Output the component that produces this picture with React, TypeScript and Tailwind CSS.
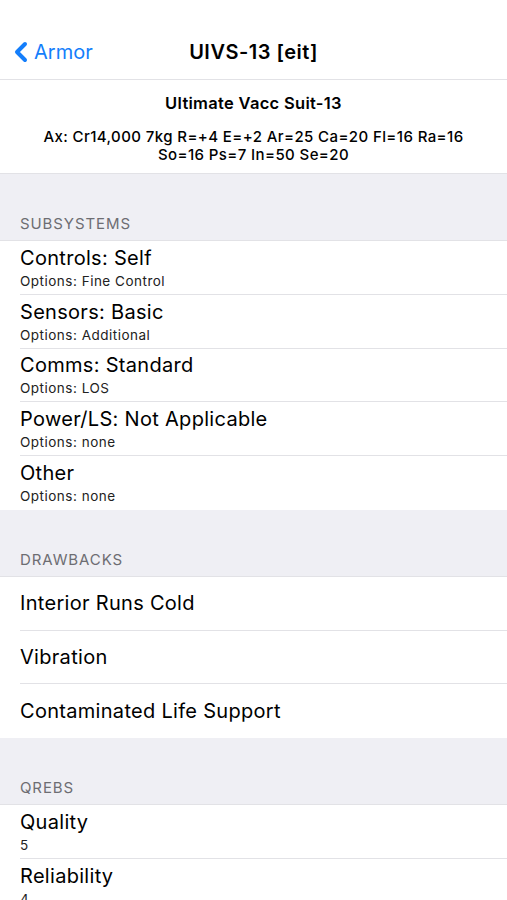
import { ChevronLeft } from "lucide-react";

type Row = { title: string; sub?: string };

const sections: { name: string; rows: Row[] }[] = [
  {
    name: "SUBSYSTEMS",
    rows: [
      { title: "Controls: Self", sub: "Options: Fine Control" },
      { title: "Sensors: Basic", sub: "Options: Additional" },
      { title: "Comms: Standard", sub: "Options: LOS" },
      { title: "Power/LS: Not Applicable", sub: "Options: none" },
      { title: "Other", sub: "Options: none" },
    ],
  },
  {
    name: "DRAWBACKS",
    rows: [
      { title: "Interior Runs Cold" },
      { title: "Vibration" },
      { title: "Contaminated Life Support" },
    ],
  },
  {
    name: "QREBS",
    rows: [
      { title: "Quality", sub: "5" },
      { title: "Reliability", sub: "4" },
      { title: "Ease of Use", sub: "0" },
    ],
  },
];

function Section({ name, rows }: { name: string; rows: Row[] }) {
  return (
    <div>
      <div className="h-[67px] bg-[#efeff4] flex items-end px-5 pb-[6px] border-b border-[#e2e2e6]">
        <span className="text-[15px] leading-[20px] text-[#6d6d72] tracking-[0.9px]">{name}</span>
      </div>
      <div className="bg-white">
        {rows.map((r, i) => (
          <div key={r.title} className="pl-5">
            <div
              className={
                "h-[53.75px] flex flex-col justify-center " +
                (i < rows.length - 1 ? "border-b border-[#e2e2e6]" : "")
              }
            >
              <div className="text-[20px] leading-[24px] text-black tracking-[0.3px]">{r.title}</div>
              {r.sub && (
                <div className="text-[13.5px] leading-[16px] text-[#222] mt-[3px] tracking-[0.5px]">
                  {r.sub}
                </div>
              )}
            </div>
          </div>
        ))}
      </div>
    </div>
  );
}

export default function App() {
  return (
    <div
      className="w-[507px] h-[900px] overflow-hidden bg-[#efeff4]"
      style={{ fontFamily: "Inter, 'Noto Sans', sans-serif" }}
    >
      <div className="h-[80px] bg-white border-b border-[#e2e2e6] relative pt-[36px]">
        <div className="flex items-center h-[32px] text-[#147efb] pl-[9px]">
          <ChevronLeft size={32} strokeWidth={3} className="-ml-1" />
          <span className="text-[20px] -ml-[3px]">Armor</span>
        </div>
        <div className="absolute inset-x-0 top-[36px] text-center text-[20px] font-semibold text-black pointer-events-none leading-[32px] tracking-[0.5px]">
          UIVS-13 [eit]
        </div>
      </div>

      <div className="bg-white h-[94px] flex flex-col items-center pt-[13px] border-b border-[#e2e2e6]">
        <div className="text-[16.5px] font-semibold text-black leading-[20px] tracking-[0.3px]">
          Ultimate Vacc Suit-13
        </div>
        <div className="text-[15px] font-medium text-black text-center leading-[18px] mt-[15px] tracking-[0.4px]">
          Ax: Cr14,000 7kg R=+4 E=+2 Ar=25 Ca=20 Fl=16 Ra=16
          <br />
          So=16 Ps=7 In=50 Se=20
        </div>
      </div>

      {sections.map((s) => (
        <Section key={s.name} name={s.name} rows={s.rows} />
      ))}
    </div>
  );
}
